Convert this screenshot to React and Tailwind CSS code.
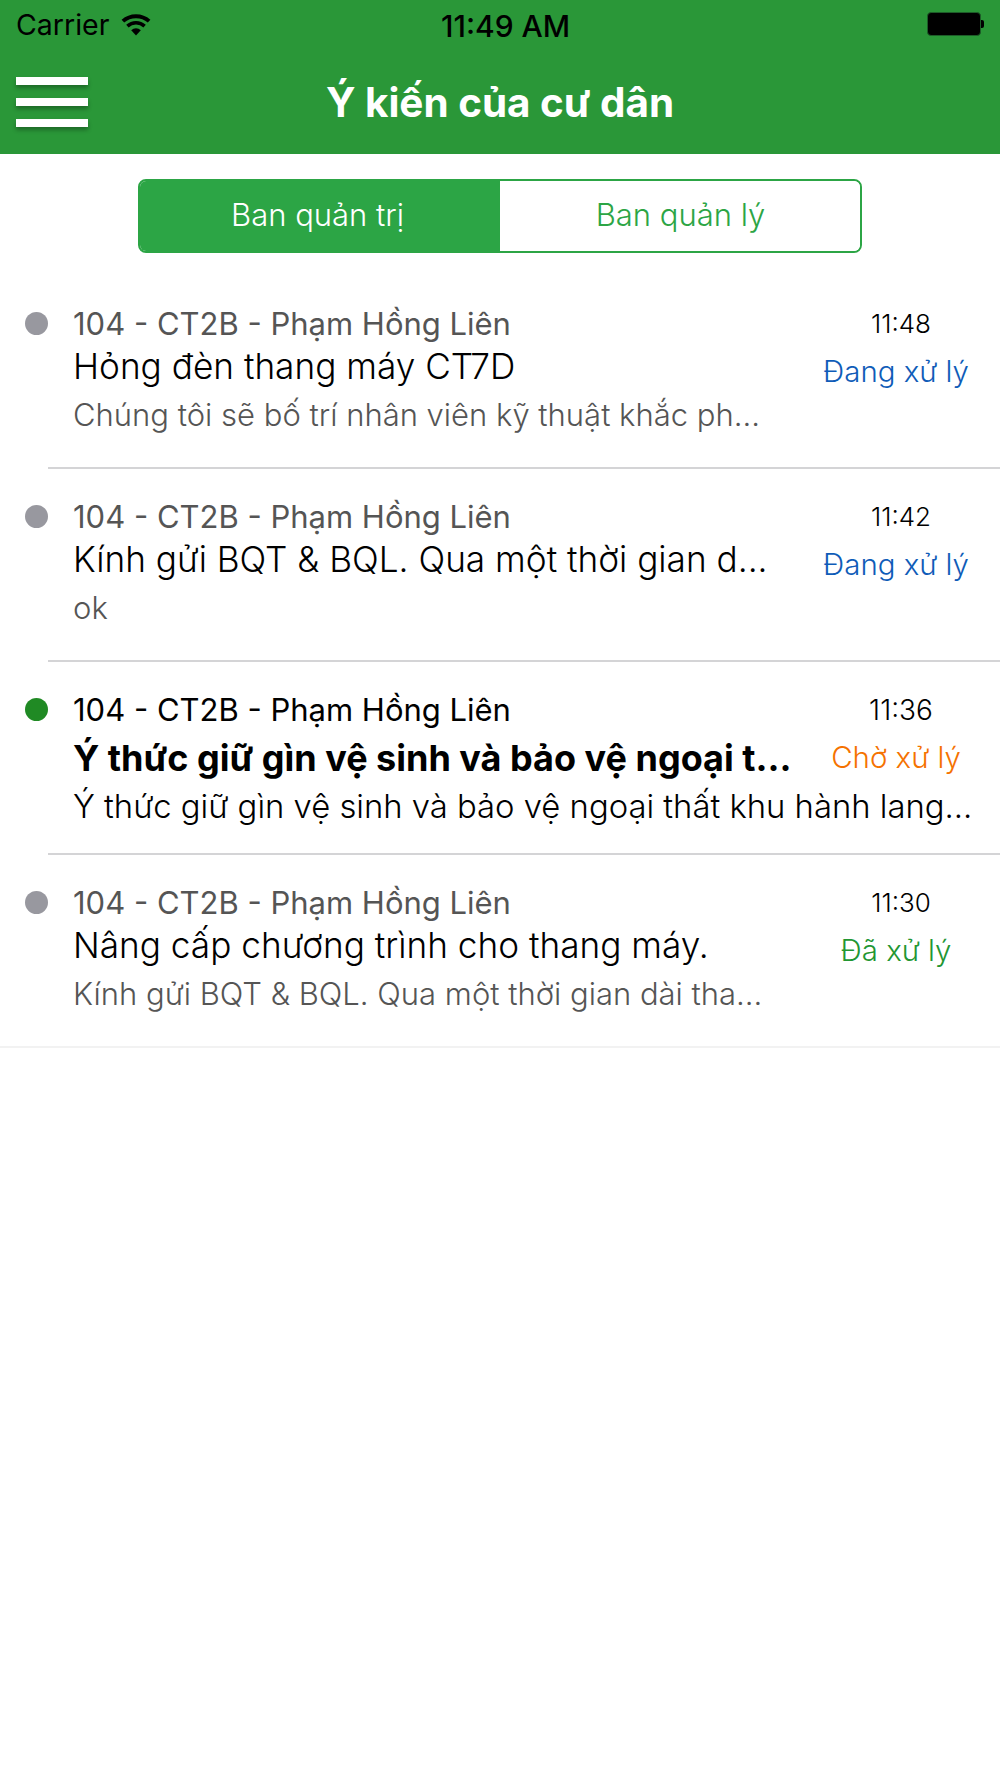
import React from 'react';

const rows = [
    { name: '104 - CT2B - Phạm Hồng Liên', title: 'Hỏng đèn thang máy CT7D', body: 'Chúng tôi sẽ bố trí nhân viên kỹ thuật khắc ph...', time: '11:48', status: 'Đang xử lý', statusClass: 'text-[#0f5cb8]' },
    { name: '104 - CT2B - Phạm Hồng Liên', title: 'Kính gửi BQT & BQL. Qua một thời gian d...', body: 'ok', time: '11:42', status: 'Đang xử lý', statusClass: 'text-[#0f5cb8]' },
    { name: '104 - CT2B - Phạm Hồng Liên', title: 'Ý thức giữ gìn vệ sinh và bảo vệ ngoại t...', body: 'Ý thức giữ gìn vệ sinh và bảo vệ ngoại thất khu hành lang...', time: '11:36', status: 'Chờ xử lý', statusClass: 'text-[#f57200]', unread: true },
    { name: '104 - CT2B - Phạm Hồng Liên', title: 'Nâng cấp chương trình cho thang máy.', body: 'Kính gửi BQT & BQL. Qua một thời gian dài tha...', time: '11:30', status: 'Đã xử lý', statusClass: 'text-[#229632]', last: true },
];

function WifiIcon() {
    return (
        <svg width="30" height="22" viewBox="0 0 30 22" fill="black">
            <path d="M15 21.5 10.2 16.2a7 7 0 0 1 9.6 0Z" />
            <path d="M7.6 13.4 5.2 10.8a14.5 14.5 0 0 1 19.6 0l-2.4 2.6a11 11 0 0 0-14.8 0Z" />
            <path d="M3.2 8.6 .6 5.8a21.5 21.5 0 0 1 28.8 0l-2.6 2.8a17.8 17.8 0 0 0-23.6 0Z" />
        </svg>
    );
}

function StatusBar() {
    return (
        <div className="relative h-[48px] flex items-center justify-between pl-[16px] pr-[16px] text-black">
            <div className="flex items-center gap-[12px] pt-[2px]">
                <span className="text-[28.5px] leading-none">Carrier</span>
                <WifiIcon />
            </div>
            <span className="absolute left-[441px] top-[10px] text-[30px] leading-[32px] font-medium">11:49 AM</span>
            <div className="flex items-center">
                <div className="w-[54px] h-[24px] rounded-[4px] bg-black border border-[#1d5c28]" />
                <div className="w-[3px] h-[8px] bg-black rounded-r-[2px]" />
            </div>
        </div>
    );
}

function Header() {
    return (
        <header className="bg-[#2a9738] h-[154px]">
            <StatusBar />
            <div className="relative h-[106px] flex items-center justify-center pt-[4px]">
                <div className="absolute left-[16px] top-[29px] flex flex-col gap-[13px]">
                    <div className="w-[72px] h-[8px] bg-white shadow-[0_3px_4px_rgba(0,0,0,0.3)]" />
                    <div className="w-[72px] h-[8px] bg-white shadow-[0_3px_4px_rgba(0,0,0,0.3)]" />
                    <div className="w-[72px] h-[8px] bg-white shadow-[0_3px_4px_rgba(0,0,0,0.3)]" />
                </div>
                <h1 className="text-[40.4px] leading-none font-bold text-white">Ý kiến của cư dân</h1>
            </div>
        </header>
    );
}

function Tabs() {
    return (
        <div className="flex justify-center pt-[25px]">
            <div className="flex w-[724px] h-[74px] rounded-[8px] border-2 border-[#2ca545] overflow-hidden text-[31px] font-light">
                <div className="w-1/2 bg-[#2ca545] text-white flex items-center justify-center pb-[2px] pr-[5px]">Ban quản trị</div>
                <div className="w-1/2 bg-white text-[#2ca545] flex items-center justify-center pb-[2px] pl-[1px]">Ban quản lý</div>
            </div>
        </div>
    );
}

function Row({ row }) {
    return (
        <div className="relative h-[193px] pl-[73px] pt-[26px] flex items-start">
            <div className={`absolute left-[25px] top-[36px] w-[23px] h-[23px] rounded-full ${row.unread ? 'bg-[#208a24]' : 'bg-[#98989f]'}`} />
            <div className="w-[740px] shrink-0">
                <div className={`text-[31px] leading-[44px] whitespace-nowrap ${row.unread ? 'text-black' : 'text-[#555555]'}`}>{row.name}</div>
                <div className={`leading-[40px] whitespace-nowrap text-black ${row.unread ? 'text-[36px] font-bold mt-[6px]' : 'text-[35.2px] font-light'}`}>{row.title}</div>
                <div className={`leading-[40px] font-light whitespace-nowrap ${row.unread ? 'text-[32.8px] text-black mt-[8px]' : 'text-[31px] text-[#555555] mt-[9px]'}`}>{row.body}</div>
            </div>
            <div className="w-[176px] shrink-0 flex flex-col items-center text-center">
                <div className={`leading-[44px] font-light text-black ${row.unread ? 'text-[28px]' : 'text-[26px]'}`}>{row.time}</div>
                <div className={`text-[29.4px] leading-[40px] font-light mt-[6px] mr-[10px] whitespace-nowrap ${row.statusClass}`}>{row.status}</div>
            </div>
            <div className={`absolute right-0 bottom-0 h-[2px] ${row.last ? 'left-0 bg-[#f2f2f2]' : 'left-[48px] bg-[#d4d4d6]'}`} />
        </div>
    );
}

export default function App() {
    return (
        <div className="w-[1000px] h-[1778px] bg-white overflow-hidden font-['Inter',sans-serif]">
            <Header />
            <Tabs />
            <div className="pt-[23px]">
                {rows.map((row) => (
                    <Row key={row.time} row={row} />
                ))}
            </div>
        </div>
    );
}
